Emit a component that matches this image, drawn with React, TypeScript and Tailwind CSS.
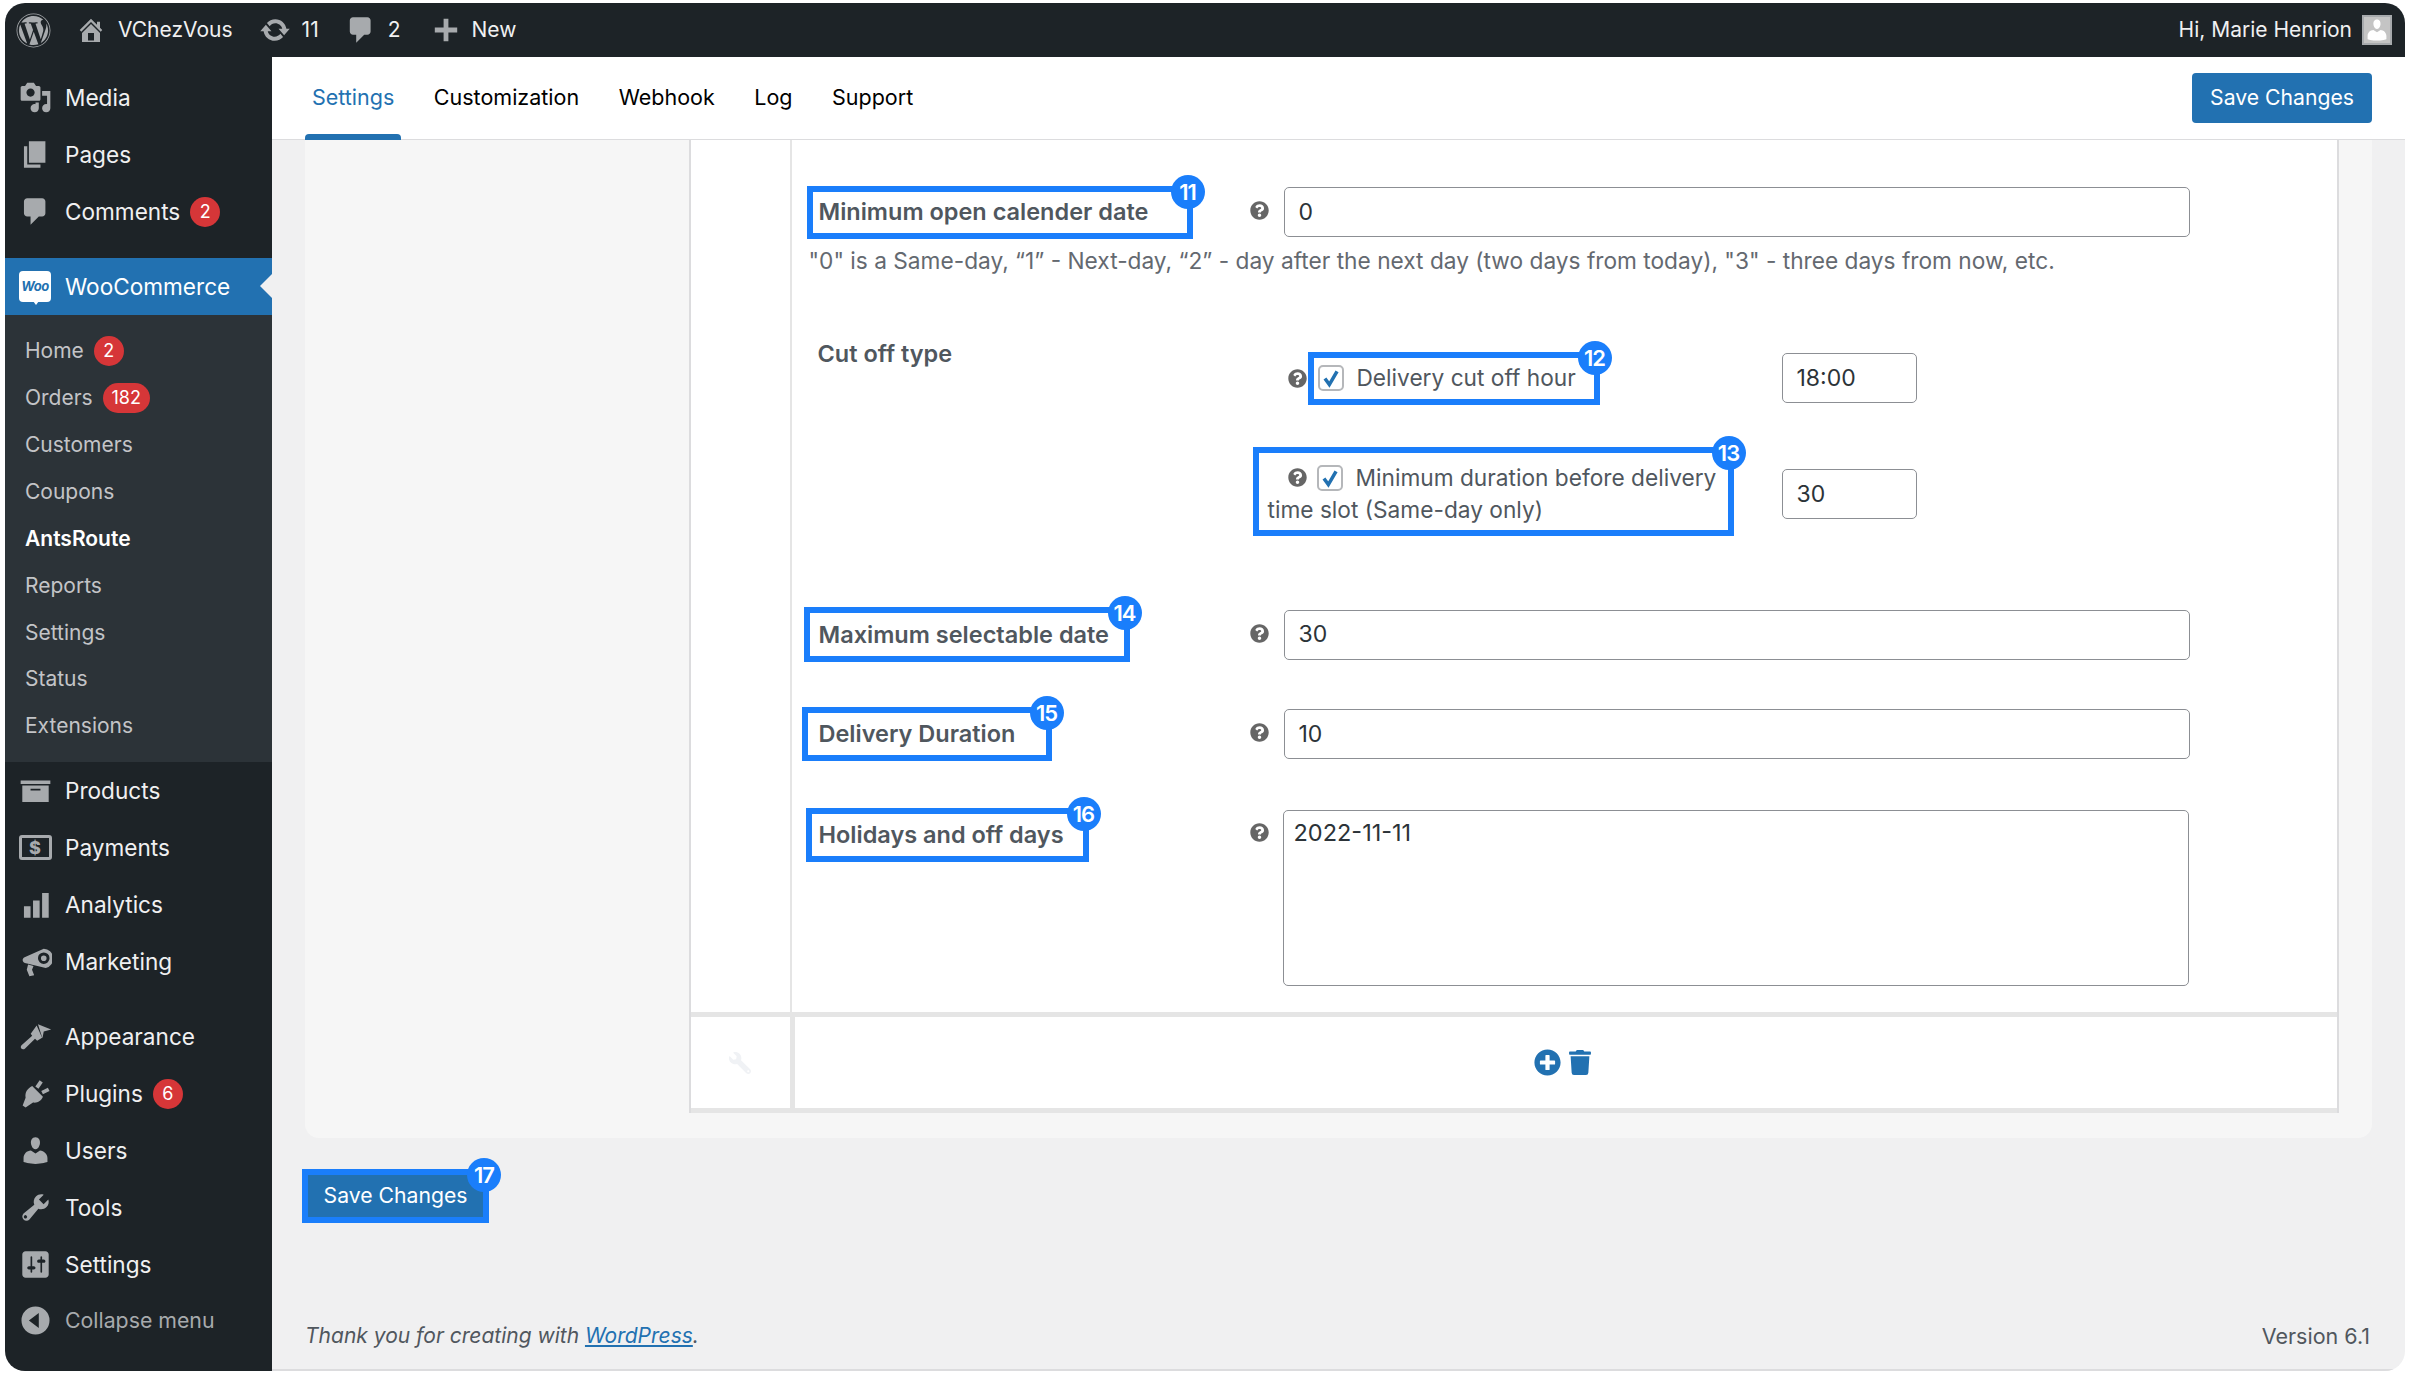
import type { ReactNode } from 'react';
import { FaPlusCircle, FaQuestionCircle, FaTrash, FaWordpress, FaWrench } from 'react-icons/fa';

const ICONS: Record<string, ReactNode> = {
  media: <path d="M13 11V4c0-.55-.45-1-1-1h-1.67L9 1H5L3.67 3H2c-.55 0-1 .45-1 1v7c0 .55.45 1 1 1h10c.55 0 1-.45 1-1zM7 4.500c1.380 0 2.500 1.120 2.500 2.500S8.380 9.500 7 9.500 4.500 8.380 4.500 7 5.620 4.500 7 4.500zM14 6h5v10.500c0 1.380-1.120 2.500-2.500 2.500S14 17.880 14 16.500s1.120-2.500 2.500-2.500c.17 0 .34.020.5.050V9h-3V6zm-4 8.050V13h2v3.500c0 1.380-1.120 2.500-2.500 2.500S7 17.880 7 16.500 8.120 14 9.500 14c.17 0 .34.020.5.050z" />,
  pages: <path d="M6 15V2h10v13H6zm-1 1h8v2H3V5h2v11z" />,
  comments: <path d="M5 2h9c1.100 0 2 .9 2 2v7c0 1.100-.9 2-2 2h-2l-5 5v-5H5c-1.100 0-2-.9-2-2V4c0-1.100.9-2 2-2z" />,
  products: <path d="M19 4v2H1V4h18zM2 7h16v10H2V7zm11 3V9H7v1h6z" />,
  analytics: <path d="M3 11h4v7H3zM8.500 7.500h4V18h-4zM14 3h4v15h-4z" />,
  marketing: <path fillRule="evenodd" d="M15 2.200a6 6 0 0 1 1.200 11.800L3.600 10.900c-1.700-.5-1.900-2.700-.2-3.500zM15 4.500a3.500 3.500 0 1 0 0 7 3.500 3.500 0 0 0 0-7zM15 6.300a1.700 1.700 0 1 1 0 3.400 1.700 1.700 0 0 1 0-3.400zM5.500 11.800l3.300 1-.9 2.200 1.300 3.300-2.900.7-1.600-4z" />,
  appearance: <path d="M11.500 2.500l8 3.200-4.500 1.200-.8 4.100zM10.700 3.400l3.300 7.300-3 1.900-1.300-1.300-6 5.900c-.7.700-1.800.700-2.300.100-.5-.6-.4-1.600.3-2.200l6.300-5.600-.9-1.200z" />,
  plugins: <path d="M12.500 2l1.900 1.300-2.600 3.800-1.900-1.300zM17.500 6.500l1 2-4 2-1-2zM8 5.500l6.500 6.500c-1 2.500-3.500 4-6 3.500l-4.500 3-1.800-1.200 1.800-4.800C3.500 9.500 5 7 8 5.500z" />,
  users: <path d="M10 9.250c-2.270 0-2.730-3.440-2.730-3.440C7 4.020 7.820 2 9.970 2c2.160 0 2.980 2.020 2.710 3.810 0 0-.41 3.440-2.680 3.440zm0 2.570L12.720 10c2.390 0 4.520 2.330 4.520 4.530v2.490s-3.650 1.130-7.240 1.130c-3.650 0-7.240-1.130-7.240-1.130v-2.490c0-2.250 1.940-4.480 4.470-4.480z" />,
  tools: <path d="M16.680 9.770c-1.340 1.340-3.300 1.670-4.950.99l-5.410 6.520c-.99.990-2.590.990-3.570 0-.99-.98-.99-2.580 0-3.570l6.520-5.420c-.68-1.650-.35-3.610.99-4.950 1.280-1.280 3.120-1.620 4.720-1.060l-2.890 2.890 2.820 2.820 2.860-2.870c.53 1.580.18 3.370-1.090 4.650zM4.500 16.500a1 1 0 1 0-1.400-1.400 1 1 0 0 0 1.400 1.400z" />,
  settings: <path d="M18 16V4c0-1.100-.9-2-2-2H4c-1.100 0-2 .9-2 2v12c0 1.100.9 2 2 2h12c1.100 0 2-.9 2-2zM8 11h1c.55 0 1 .45 1 1s-.45 1-1 1H8v1.500c0 .280-.22.500-.5.500s-.5-.22-.5-.5V13H6c-.55 0-1-.45-1-1s.45-1 1-1h1V5.500c0-.28.22-.5.5-.5s.5.220.5.500V11zm5-2h-1c-.55 0-1-.45-1-1s.45-1 1-1h1V5.500c0-.28.22-.5.5-.5s.5.22.5.5V7h1c.55 0 1 .45 1 1s-.45 1-1 1h-1v5.500c0 .28-.22.5-.5.5s-.5-.22-.5-.5V9z" />,
  collapse: <path fillRule="evenodd" d="M10 1.500a8.500 8.500 0 1 1 0 17 8.500 8.500 0 0 1 0-17zM12 5.500L6 10l6 4.500z" />,
  home: <path d="M16 8.500l1.530 1.530-1.060 1.060L10 4.620l-6.470 6.470-1.060-1.060L10 2.500l4 4v-2h2v4zm-6-2.460l6 5.990V18H4v-5.970zM12 17v-5H8v5h4z" />,
  sync: <path d="M10.200 3.280c3.530 0 6.430 2.610 6.920 6h2.080l-3.500 4-3.500-4h2.320c-.45-1.970-2.210-3.440-4.320-3.440-1.450 0-2.730.71-3.540 1.780L4.950 5.660C6.230 4.200 8.110 3.280 10.200 3.280zm-.4 13.440c-3.520 0-6.430-2.610-6.920-6H.8l3.500-4c1.170 1.330 2.330 2.670 3.500 4H5.480c.45 1.970 2.210 3.440 4.320 3.440 1.450 0 2.730-.71 3.540-1.780l1.710 1.950c-1.280 1.460-3.150 2.390-5.250 2.390z" />,
  plus: <path d="M17 8.500v3h-5.500V17h-3v-5.500H3v-3h5.500V3h3v5.500z" />,
};

const Dash = ({ name, className }: { name: string; className: string }): React.JSX.Element => (
  <svg viewBox="0 0 20 20" fill="currentColor" className={className}>
    {ICONS[name]}
  </svg>
);

const PaymentsIcon = (): React.JSX.Element => (
  <div className="flex h-[25px] w-[33px] items-center justify-center rounded-[3px] border-[3px] border-[#a7aaad] text-[18px] font-extrabold leading-none text-[#a7aaad]">
    $
  </div>
);

const WooIcon = (): React.JSX.Element => (
  <div className="relative flex h-[31px] w-[32px] items-center justify-center rounded-[4px] bg-white text-[13px] font-bold italic leading-none tracking-[-0.5px] text-[#2271b1]">
    Woo
    <div className="absolute -bottom-[3px] left-[14px] h-0 w-0 border-x-[3px] border-t-[4px] border-x-transparent border-t-white" />
  </div>
);

const Count = ({ children, className }: { children: ReactNode; className: string }): React.JSX.Element => (
  <span className={`flex h-[30px] items-center justify-center rounded-full bg-[#d63638] text-[18px] leading-none text-white ${className}`}>
    {children}
  </span>
);

const SideItem = ({ icon, label, badge }: { icon: ReactNode; label: string; badge?: ReactNode }): React.JSX.Element => (
  <div className="flex h-[57px] items-center text-[22.600px] text-[#f0f0f1]">
    <div className="flex w-[60px] justify-center">{icon}</div>
    <span>{label}</span>
    {badge}
  </div>
);

const SubItem = ({ label, badge, strong }: { label: string; badge?: ReactNode; strong?: boolean }): React.JSX.Element => (
  <div className={`flex h-[46.9px] items-center pl-[20px] text-[21px] ${strong ? 'font-semibold text-white' : 'text-[#c3c4c7]'}`}>
    <span>{label}</span>
    {badge}
  </div>
);

const sideIcon = 'h-[33px] w-[33px] text-[#a7aaad]';

const Sidebar = (): React.JSX.Element => (
  <aside className="flex w-[267px] shrink-0 flex-col bg-[#1d2327]">
    <div className="flex flex-col pt-[12px]">
      <SideItem icon={<Dash name="media" className={sideIcon} />} label="Media" />
      <SideItem icon={<Dash name="pages" className={sideIcon} />} label="Pages" />
      <SideItem
        icon={<Dash name="comments" className={sideIcon} />}
        label="Comments"
        badge={<Count className="ml-[10px] w-[30px]">2</Count>}
      />
    </div>
    <div className="relative mt-[18px] flex h-[57px] items-center bg-[#2271b1] text-[22.600px] text-white">
      <div className="flex w-[60px] justify-center">
        <WooIcon />
      </div>
      <span>WooCommerce</span>
      <div className="absolute right-0 top-[16px] h-0 w-0 border-y-[12px] border-r-[12px] border-y-transparent border-r-[#f0f0f1]" />
    </div>
    <div className="flex h-[447px] flex-col bg-[#2c3338] pt-[12.500px]">
      <SubItem label="Home" badge={<Count className="ml-[10px] w-[30px]">2</Count>} />
      <SubItem label="Orders" badge={<Count className="ml-[10px] w-[47px]">182</Count>} />
      <SubItem label="Customers" />
      <SubItem label="Coupons" />
      <SubItem label="AntsRoute" strong />
      <SubItem label="Reports" />
      <SubItem label="Settings" />
      <SubItem label="Status" />
      <SubItem label="Extensions" />
    </div>
    <div className="flex flex-col">
      <SideItem icon={<Dash name="products" className={sideIcon} />} label="Products" />
      <SideItem icon={<PaymentsIcon />} label="Payments" />
      <SideItem icon={<Dash name="analytics" className={sideIcon} />} label="Analytics" />
      <SideItem icon={<Dash name="marketing" className={sideIcon} />} label="Marketing" />
    </div>
    <div className="mt-[18px] flex flex-col">
      <SideItem icon={<Dash name="appearance" className={sideIcon} />} label="Appearance" />
      <SideItem
        icon={<Dash name="plugins" className={sideIcon} />}
        label="Plugins"
        badge={<Count className="ml-[10px] w-[30px]">6</Count>}
      />
      <SideItem icon={<Dash name="users" className={sideIcon} />} label="Users" />
      <SideItem icon={<Dash name="tools" className={sideIcon} />} label="Tools" />
      <SideItem icon={<Dash name="settings" className={sideIcon} />} label="Settings" />
      <div className="flex h-[55px] items-center text-[21.300px] text-[#a7aaad]">
        <div className="flex w-[60px] justify-center">
          <Dash name="collapse" className={sideIcon} />
        </div>
        <span>Collapse menu</span>
      </div>
    </div>
  </aside>
);

const TopBar = (): React.JSX.Element => (
  <header className="flex h-[54px] shrink-0 items-center bg-[#1d2327] text-[21px] text-[#f0f0f1]">
    <FaWordpress className="ml-[11px] h-[35px] w-[35px] text-[#a7aaad]" />
    <Dash name="home" className="ml-[25px] h-[30px] w-[30px] text-[#a7aaad]" />
    <span className="ml-[12px]">VChezVous</span>
    <Dash name="sync" className="ml-[26px] h-[32px] w-[32px] text-[#a7aaad]" />
    <span className="ml-[11px]">11</span>
    <Dash name="comments" className="ml-[26px] h-[32px] w-[32px] text-[#a7aaad]" />
    <span className="ml-[11px]">2</span>
    <Dash name="plus" className="ml-[29px] h-[32px] w-[32px] text-[#a7aaad]" />
    <span className="ml-[10px]">New</span>
    <span className="ml-auto">Hi, Marie Henrion</span>
    <div className="ml-[10px] mr-[13px] flex h-[30px] w-[30px] items-end justify-center overflow-hidden border-2 border-[#a7aaad] bg-[#c4c4c4]">
      <Dash name="users" className="h-[26px] w-[26px] text-white" />
    </div>
  </header>
);

const Badge = ({ n }: { n: number }): React.JSX.Element => (
  <span className="absolute -right-[18px] -top-[17px] flex h-[34px] w-[34px] items-center justify-center rounded-full bg-[#1a7efb] text-[22px] font-semibold leading-none tracking-[-1px] text-white">
    {n}
  </span>
);

const Help = ({ className = '' }: { className?: string }): React.JSX.Element => (
  <FaQuestionCircle className={`h-[19px] w-[19px] shrink-0 text-[#666] ${className}`} />
);

const Check = (): React.JSX.Element => (
  <span className="flex h-[26px] w-[26px] shrink-0 items-center justify-center rounded-[5px] border-2 border-[#b5b7ba] bg-white">
    <svg viewBox="0 0 20 20" className="h-[22px] w-[22px]" fill="none" stroke="#2271b1" strokeWidth="3.200">
      <path d="M4.500 10.500l4 5.500 7-12" />
    </svg>
  </span>
);

const labelText = 'text-[23.500px] font-semibold leading-none text-[#50575e] whitespace-nowrap';
const inputClass = 'flex h-[50px] items-center rounded-[5px] border-[1.500px] border-[#8c8f94] bg-white text-[23px] text-[#2c3338]';

const FieldRow = ({ label, n, value, boxClass }: { label: string; n: number; value: string; boxClass: string }): React.JSX.Element => (
  <div className="flex items-center">
    <div className="flex w-[457px] shrink-0">
      <div className={`relative flex items-center border-[6px] border-[#1a7efb] ${labelText} ${boxClass}`}>
        {label}
        <Badge n={n} />
      </div>
    </div>
    <Help className="mb-[3px]" />
    <div className={`ml-[15px] w-[906px] pl-[14px] ${inputClass}`}>{value}</div>
  </div>
);

const NAV = ['Settings', 'Customization', 'Webhook', 'Log', 'Support'];

const SettingsTable = (): React.JSX.Element => (
  <div className="ml-[383.500px] flex w-[1650px] flex-col border-x-[2px] border-[#dcdcde] bg-white">
    <div className="flex h-[872px]">
      <div className="w-[101px] shrink-0 border-r-[2px] border-[#e5e5e5]" />
      <div className="flex flex-1 flex-col pl-[1px] pt-[45.500px]">
        <FieldRow label="Minimum open calender date" n={11} value="0" boxClass="ml-[14px] h-[53px] w-[386px] pl-[6px]" />
        <p className="ml-[16px] mt-[7px] h-[30px] whitespace-nowrap text-[22.700px] leading-[30px] text-[#646970]">
          "0" is a Same-day, “1” - Next-day, “2” - day after the next day (two days from today), "3" - three days from now, etc.
        </p>
        <div className="mt-[62px] flex">
          <div className={`ml-[25px] w-[435px] shrink-0 pt-[4px] ${labelText}`}>Cut off type</div>
          <div className="flex flex-col pt-[14px]">
            <div className="flex items-center">
              <div className="flex w-[529px] shrink-0 items-center pl-[35px]">
                <Help />
                <div className="relative ml-[1px] flex h-[53px] w-[292px] items-center border-[6px] border-[#1a7efb] pl-[4px] text-[22.700px] text-[#50575e]">
                  <Check />
                  <span className="ml-[13px] whitespace-nowrap">Delivery cut off hour</span>
                  <Badge n={12} />
                </div>
              </div>
              <div className={`w-[135px] pl-[14px] ${inputClass}`}>18:00</div>
            </div>
            <div className="mt-[42px] flex items-center">
              <div className="w-[529px] shrink-0">
                <div className="relative flex h-[89px] w-[481px] flex-col border-[6px] border-[#1a7efb] pt-[9px] text-[22.700px] leading-[32px] text-[#50575e]">
                  <div className="flex items-center pl-[29px]">
                    <Help />
                    <span className="ml-[10px]">
                      <Check />
                    </span>
                    <span className="ml-[13px] whitespace-nowrap">Minimum duration before delivery</span>
                  </div>
                  <div className="pl-[9px]">time slot (Same-day only)</div>
                  <Badge n={13} />
                </div>
              </div>
              <div className={`mt-[6px] w-[135px] pl-[14px] ${inputClass}`}>30</div>
            </div>
          </div>
        </div>
        <div className="mt-[71.500px]">
          <FieldRow label="Maximum selectable date" n={14} value="30" boxClass="ml-[11px] h-[55px] w-[326px] pl-[9px]" />
        </div>
        <div className="mt-[45px]">
          <FieldRow label="Delivery Duration" n={15} value="10" boxClass="ml-[9px] h-[54px] w-[250px] pl-[11px]" />
        </div>
        <div className="mt-[47px] flex items-start">
          <div className="flex w-[457px] shrink-0">
            <div className={`relative ml-[13px] flex h-[54px] w-[283px] items-center border-[6px] border-[#1a7efb] pl-[7px] ${labelText}`}>
              Holidays and off days
              <Badge n={16} />
            </div>
          </div>
          <Help className="mt-[15px]" />
          <div className="ml-[14px] mt-[2px] h-[176px] w-[906px] rounded-[5px] border-[1.500px] border-[#8c8f94] bg-white pl-[10px] pt-[4px] text-[23.500px] text-[#2c3338]">
            2022-11-11
          </div>
        </div>
      </div>
    </div>
    <div className="flex h-[101px] border-y-[5px] border-[#e5e5e5]">
      <div className="flex w-[99px] shrink-0 items-center justify-center border-x-[4px] border-white">
        <FaWrench className="h-[22px] w-[22px] -scale-x-100 text-[#f0f2f5]" />
      </div>
      <div className="w-[5px] shrink-0 bg-[#e5e5e5]" />
      <div className="flex flex-1 items-center gap-[8px] pl-[739px] text-[#2271b1]">
        <FaPlusCircle className="h-[27px] w-[27px]" />
        <FaTrash className="h-[25px] w-[22px]" />
      </div>
    </div>
  </div>
);

const Main = (): React.JSX.Element => (
  <main className="flex min-w-0 flex-1 flex-col bg-[#f0f0f1]">
    <div className="flex h-[83px] shrink-0 items-center border-b border-[#dcdcde] bg-white pl-[40px] pr-[33px]">
      <nav className="mb-[2px] flex items-center gap-[39.500px] text-[21.500px] text-black">
        {NAV.map((item, i) => (
          <span key={item} className={`relative ${i === 0 ? 'text-[#2271b1]' : ''}`}>
            {item}
            {i === 0 && (
              <span className="absolute -left-[7px] -right-[7px] top-[53px] h-[6px] rounded-t-[4px] bg-[#2271b1]" />
            )}
          </span>
        ))}
      </nav>
      <button type="button" className="ml-auto flex h-[50px] w-[180px] items-center justify-center rounded-[4px] bg-[#2271b1] text-[21.200px] text-white">
        Save Changes
      </button>
    </div>
    <div className="ml-[33px] mr-[33px] h-[998px] shrink-0 rounded-b-[14px] bg-[#f6f6f6]">
      <SettingsTable />
    </div>
    <div className="ml-[30px] mt-[31px] w-[187px]">
      <div className="relative flex h-[54px] items-center justify-center border-[6px] border-[#1a7efb] bg-[#2271b1] text-[21.200px] text-white">
        Save Changes
        <Badge n={17} />
      </div>
    </div>
    <footer className="mt-auto flex h-[66px] items-start justify-between border-b-2 border-[#dcdcde] pl-[33px] pr-[35px] pt-[16px] text-[21.500px] leading-[30px] text-[#50575e]">
      <span className="text-[21px] italic">
        Thank you for creating with <span className="text-[#2271b1] underline">WordPress</span>.
      </span>
      <span>Version 6.1</span>
    </footer>
  </main>
);

export default function App(): React.JSX.Element {
  return (
    <div className="h-[1374px] w-[2409px] overflow-hidden bg-white pl-[5px] pt-[3px] font-['Inter',sans-serif]">
      <div className="flex h-[1368px] w-[2400px] flex-col overflow-hidden rounded-[20px]">
        <TopBar />
        <div className="flex min-h-0 flex-1">
          <Sidebar />
          <Main />
        </div>
      </div>
    </div>
  );
}
